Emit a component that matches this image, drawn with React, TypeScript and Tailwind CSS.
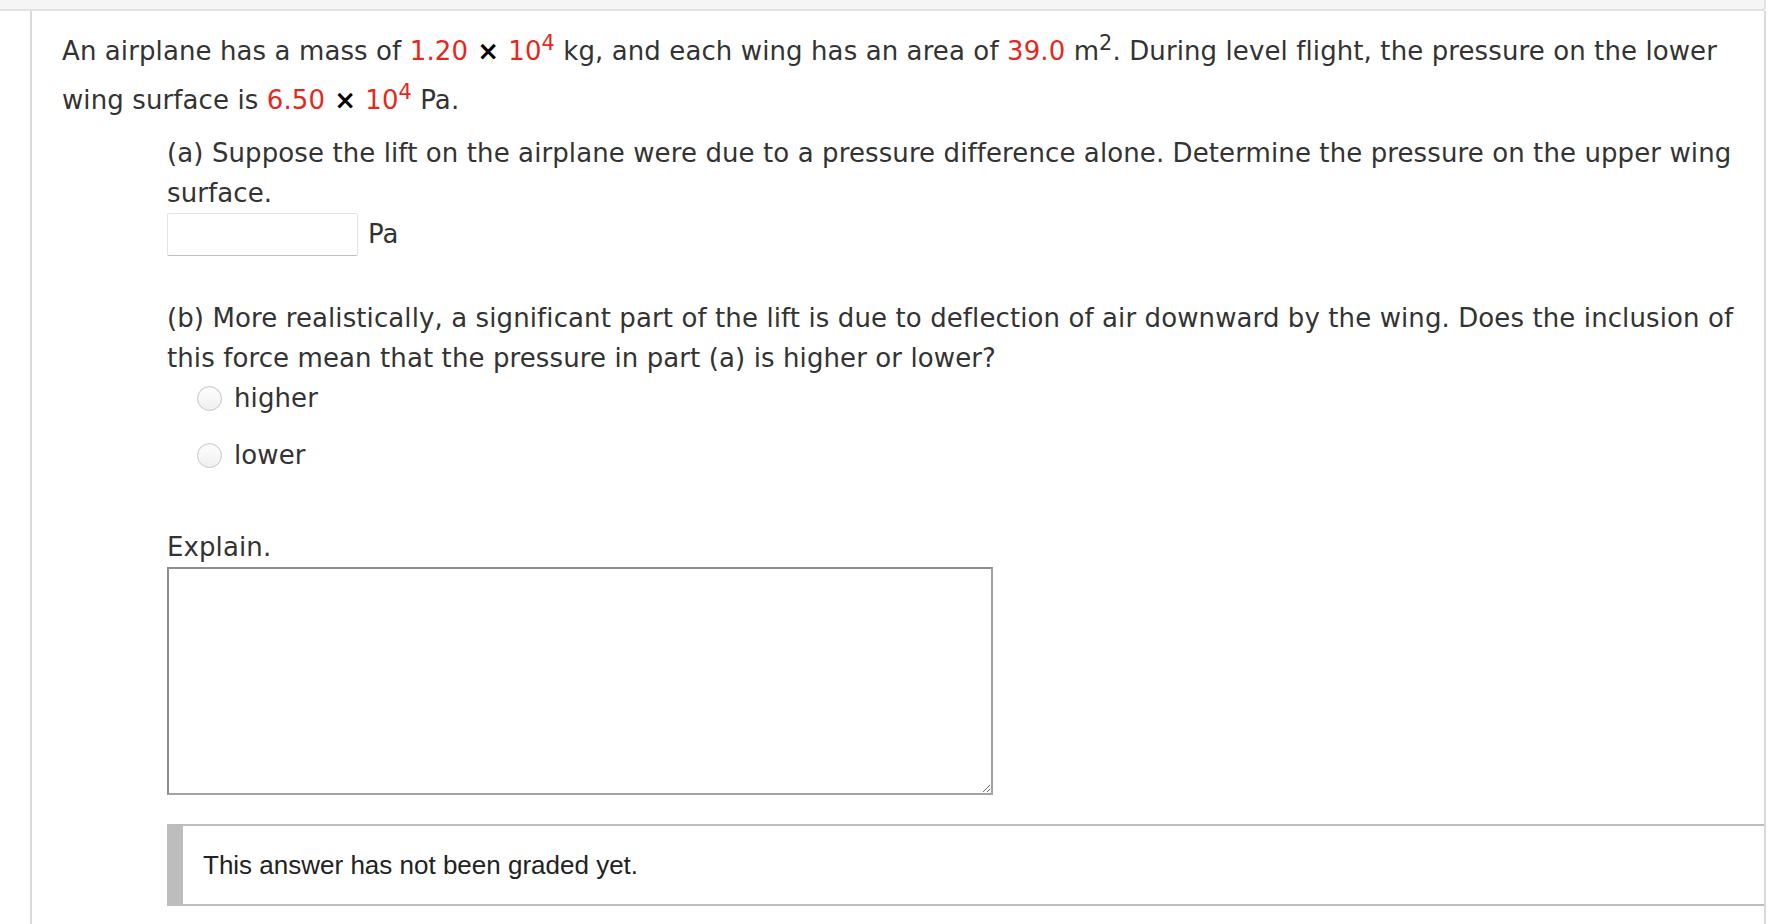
const red = "text-[#e5281d]";

function Times() {
  return <span className="font-bold text-black"> × </span>;
}

function Pow({ base, exp }: { base: string; exp: string }) {
  return (
    <span className={red}>
      {base}
      <sup className="text-[0.8em]">{exp}</sup>
    </span>
  );
}

function Radio({ label }: { label: string }) {
  return (
    <label className="flex items-center h-[40px] pl-[30px] gap-[12px]">
      <span className="w-[25px] h-[25px] rounded-full border border-[#c8c8c8] bg-gradient-to-b from-white to-[#efefef] shadow-[inset_0_1px_1px_rgba(0,0,0,0.06)]" />
      <span>{label}</span>
    </label>
  );
}

export default function App() {
  return (
    <div className="min-h-[924px] bg-white flex flex-col text-[#333] font-['DejaVu_Sans',Verdana,sans-serif] text-[26px] tracking-[0.1px]">
      <div className="h-[11px] mr-[6px] bg-[#f5f5f5] border-b-2 border-r-2 border-[#e2e2e2] rounded-br-[4px]" />
      <div className="flex-1 ml-[30px] mr-[6px] border-l-2 border-r-2 border-[#d9d9d9] pl-[30px] pt-[16px]">
        <p className="leading-[49px] pr-[10px]">
          An airplane has a mass of <span className={red}>1.20</span>
          <Times />
          <Pow base="10" exp="4" /> kg, and each wing has an area of{" "}
          <span className={red}>39.0</span> m<sup className="text-[0.8em]">2</sup>. During
          level flight, the pressure on the lower wing surface is{" "}
          <span className={red}>6.50</span>
          <Times />
          <Pow base="10" exp="4" /> Pa.
        </p>

        <div className="pl-[105px] pt-[8px]">
          <p className="leading-[40px] pr-[10px]">
            (a) Suppose the lift on the airplane were due to a pressure difference alone. Determine the
            pressure on the upper wing surface.
          </p>
          <div className="flex items-center gap-[10px]">
            <input
              type="text"
              className="w-[191px] h-[43px] border border-[#e3e3e3] border-b-[#bdbdbd] rounded-[2px] px-2 outline-none"
            />
            <span>Pa</span>
          </div>

          <p className="leading-[40px] pr-[10px] mt-[42px]">
            (b) More realistically, a significant part of the lift is due to deflection of air downward by
            the wing. Does the inclusion of this force mean that the pressure in part (a) is higher or
            lower?
          </p>
          <div className="flex flex-col gap-[17px]">
            <Radio label="higher" />
            <Radio label="lower" />
          </div>

          <p className="leading-[40px] mt-[52px]">Explain.</p>
          <textarea className="block w-[826px] h-[228px] border-2 border-[#a3a3a3] border-t-[#8e8e8e] border-l-[#8e8e8e] resize outline-none" />

          <div className="flex mt-[29px] h-[82px] border-y-2 border-[#bdbdbd]">
            <div className="w-[16px] bg-[#bdbdbd] -my-[2px]" />
            <div className="flex items-center pl-[20px] font-['Liberation_Sans',Arial,sans-serif] text-[26px] tracking-normal text-[#222]">
              This answer has not been graded yet.
            </div>
          </div>
        </div>
      </div>
    </div>
  );
}
